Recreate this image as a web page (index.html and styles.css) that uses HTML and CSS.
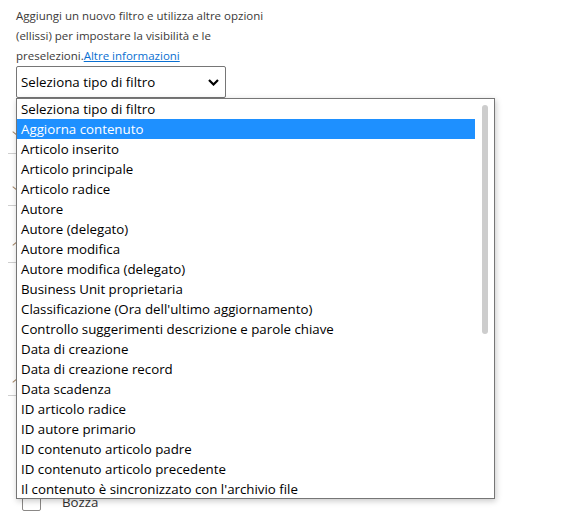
FILE: index.html
```html
<!DOCTYPE html>
<html lang="it">
<head>
<meta charset="utf-8">
<title>Filtro</title>
<link rel="stylesheet" href="styles.css">
</head>
<body>
<div class="panel">
  <p class="desc">Aggiungi un nuovo filtro e utilizza altre opzioni<br>(ellissi) per impostare la visibilità e le<br>preselezioni.<a href="#" class="link">Altre informazioni</a></p>
  <div class="select-wrap">
    <div class="select">
      <span>Seleziona tipo di filtro</span>
      <svg class="chev" width="11" height="7" viewBox="0 0 11 7"><path d="M1 1l4.5 4.5L10 1" fill="none" stroke="#000" stroke-width="2.2"/></svg>
    </div>
    <div class="dropdown">
      <ul class="options">
        <li>Seleziona tipo di filtro</li>
        <li class="active">Aggiorna contenuto</li>
        <li>Articolo inserito</li>
        <li>Articolo principale</li>
        <li>Articolo radice</li>
        <li>Autore</li>
        <li>Autore (delegato)</li>
        <li>Autore modifica</li>
        <li>Autore modifica (delegato)</li>
        <li>Business Unit proprietaria</li>
        <li>Classificazione (Ora dell'ultimo aggiornamento)</li>
        <li>Controllo suggerimenti descrizione e parole chiave</li>
        <li>Data di creazione</li>
        <li>Data di creazione record</li>
        <li>Data scadenza</li>
        <li>ID articolo radice</li>
        <li>ID autore primario</li>
        <li>ID contenuto articolo padre</li>
        <li>ID contenuto articolo precedente</li>
        <li>Il contenuto è sincronizzato con l'archivio file</li>
      </ul>
      <div class="scrolltrack"><div class="thumb"></div></div>
    </div>
  </div>
  <div class="behind">
    <div class="row r1"><span class="mark"></span></div>
    <div class="row r2"><span class="mark"></span></div>
    <div class="row r3"><span class="mark"></span></div>
    <div class="row r4"><span class="mark"></span></div>
    <div class="bozza"><span class="box"></span><span class="bozza-label">Bozza</span></div>
  </div>
</div>
</body>
</html>
```
FILE: styles.css
```css
html, body {
  margin: 0;
  padding: 0;
  background: #fff;
}
body {
  font-family: "Open Sans", "Noto Sans", sans-serif;
  color: #000;
  width: 573px;
  height: 518px;
  overflow: hidden;
}
.panel {
  padding: 6px 0 0 16px;
}
.desc {
  margin: 0;
  font-size: 11.5px;
  line-height: 20px;
  color: #3b3a39;
}
.link {
  color: #0a6fd1;
  text-decoration: underline;
}
.select-wrap {
  position: relative;
  width: 210px;
}
.select {
  box-sizing: border-box;
  width: 210px;
  height: 32px;
  border: 1px solid #767676;
  border-radius: 2px;
  display: flex;
  align-items: center;
  justify-content: space-between;
  padding: 0 6px 0 4px;
  font-size: 13.3px;
  background: #fff;
}
.chev {
  display: block;
}
.dropdown {
  position: absolute;
  top: 32px;
  left: 0;
  width: 479px;
  height: 401px;
  box-sizing: border-box;
  border: 1px solid #767676;
  background: #fff;
  box-shadow: 1px 2px 6px rgba(0,0,0,0.22);
  display: flex;
  z-index: 5;
}
.options {
  list-style: none;
  margin: 0;
  padding: 0;
  flex: 1;
  font-size: 13.3px;
}
.options li {
  height: 20px;
  line-height: 20px;
  padding-left: 4px;
  white-space: nowrap;
}
.options li.active {
  background: #1e90ff;
  color: #fff;
}
.scrolltrack {
  width: 19px;
  padding-top: 6px;
  display: flex;
  justify-content: center;
}
.thumb {
  width: 6px;
  height: 229px;
  border-radius: 3px;
  background: #cdcdcd;
}
.behind {
  margin-left: -16px;
}
.row {
  position: relative;
  box-sizing: border-box;
  border-bottom: 1px solid #cfcfcf;
  margin-left: 8px;
  width: 40px;
}
.r1 { height: 56px; }
.r2 { height: 52px; }
.r3 { height: 57px; }
.r4 { height: 133px; }
.mark {
  position: absolute;
  left: 4px;
  width: 6px;
  height: 1px;
  background: #a08060;
  transform: rotate(40deg);
}
.r1 .mark { bottom: 19px; }
.r2 .mark { bottom: 16px; }
.r3 .mark { bottom: 18px; transform: rotate(-40deg); }
.r4 .mark { bottom: 14px; transform: rotate(-40deg); }
.bozza {
  display: flex;
  align-items: center;
  padding: 96px 0 0 22px;
  gap: 21px;
}
.box {
  width: 19px;
  height: 19px;
  box-sizing: border-box;
  border: 1px solid #8a8886;
  border-radius: 2px;
}
.bozza-label {
  font-size: 13.3px;
  color: #323130;
}
```
